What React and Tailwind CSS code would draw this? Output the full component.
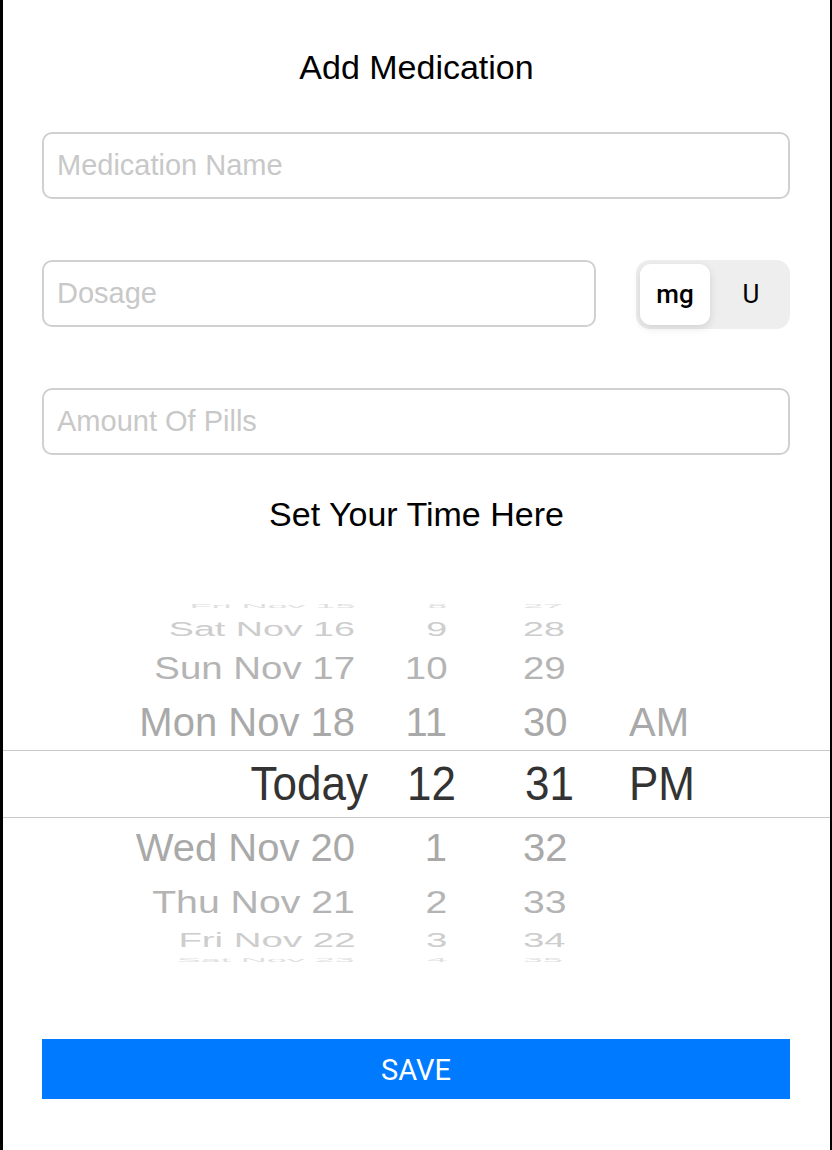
import React, { useState } from 'react';

const rows = [
  { date: 'Fri Nov 15', hour: '8', min: '27', ap: '', h: 'h-[20px]', color: 'text-[#e0e0e0]', tf: 'scale-x-[0.9] scale-y-[0.15]' },
  { date: 'Sat Nov 16', hour: '9', min: '28', ap: '', h: 'h-[26px]', color: 'text-[#cdcdcd]', tf: 'scale-x-[0.94] scale-y-[0.52]' },
  { date: 'Sun Nov 17', hour: '10', min: '29', ap: '', h: 'h-[52px]', color: 'text-[#b4b4b4]', tf: 'scale-x-[0.96] scale-y-[0.77]' },
  { date: 'Mon Nov 18', hour: '11', min: '30', ap: 'AM', h: 'h-[56px]', color: 'text-[#a9a9a9]', tf: 'scale-x-100 scale-y-100' },
  { selected: true, date: 'Today', hour: '12', min: '31', ap: 'PM' },
  { date: 'Wed Nov 20', hour: '1', min: '32', ap: '', h: 'h-[60px]', color: 'text-[#a9a9a9]', tf: 'scale-x-100 scale-y-[0.95]' },
  { date: 'Thu Nov 21', hour: '2', min: '33', ap: '', h: 'h-[48px]', color: 'text-[#b4b4b4]', tf: 'scale-x-[0.98] scale-y-[0.8]' },
  { date: 'Fri Nov 22', hour: '3', min: '34', ap: '', h: 'h-[28px]', color: 'text-[#cdcdcd]', tf: 'scale-x-[0.96] scale-y-[0.5]' },
  { date: 'Sat Nov 23', hour: '4', min: '35', ap: '', h: 'h-[12px]', color: 'text-[#e0e0e0]', tf: 'scale-x-[0.9] scale-y-[0.15]' },
];

const PickerRow = ({ row }) => {
  if (row.selected) {
    return (
      <div className="flex h-[68px] items-center border-y border-[#c8c8c8] text-[44px] leading-none text-[#333333]">
        <div className="w-[365px] text-right">
          <span className="inline-block origin-right scale-y-[1.08]">{row.date}</span>
        </div>
        <div className="w-[88px] text-right">
          <span className="inline-block origin-right scale-y-[1.08]">{row.hour}</span>
        </div>
        <div className="w-[69px]" />
        <div className="w-[104px]">
          <span className="inline-block origin-left scale-y-[1.08]">{row.min}</span>
        </div>
        <div>
          <span className="inline-block origin-left scale-y-[1.08]">{row.ap}</span>
        </div>
      </div>
    );
  }

  return (
    <div className={`flex items-center overflow-hidden text-[40px] leading-none ${row.h} ${row.color}`}>
      <div className="w-[352px] text-right">
        <span className={`inline-block origin-right ${row.tf}`}>{row.date}</span>
      </div>
      <div className="w-[92px] text-right">
        <span className={`inline-block origin-right ${row.tf}`}>{row.hour}</span>
      </div>
      <div className="w-[76px]" />
      <div className="w-[106px]">
        <span className={`inline-block origin-left ${row.tf}`}>{row.min}</span>
      </div>
      <div>
        <span className={`inline-block origin-left ${row.tf}`}>{row.ap}</span>
      </div>
    </div>
  );
};

const App = () => {
  const [unit, setUnit] = useState('mg');
  const [form, setForm] = useState({ name: '', dosage: '', pills: '' });

  const handleChange = (e) => {
    const { name, value } = e.target;
    setForm(prev => ({ ...prev, [name]: value }));
  };

  const inputClass =
    'h-[67px] w-full rounded-[10px] border-2 border-[#d0d0d0] bg-white px-[13px] text-[29px] text-black placeholder:text-[#c8c8c8] focus:outline-none';

  return (
    <div className="min-h-[1150px] w-full border-l-[3px] border-r-2 border-black bg-white font-['Liberation_Sans',Arial,sans-serif]">
      <h1 className="pt-[50px] text-center text-[34px] leading-[34px] text-black">Add Medication</h1>

      <div className="px-[39px] pr-[40px]">
        <div className="mt-[48px]">
          <input
            name="name" value={form.name} onChange={handleChange}
            placeholder="Medication Name" className={inputClass}
          />
        </div>

        <div className="mt-[61px] flex items-start gap-[40px]">
          <input
            name="dosage" value={form.dosage} onChange={handleChange}
            placeholder="Dosage" className={`${inputClass} flex-1`}
          />
          <div className="flex h-[69px] w-[154px] shrink-0 gap-[6px] rounded-[14px] bg-[#eeeeef] p-[4px] font-['Roboto',sans-serif] text-[26px] text-black">
            <button
              type="button" onClick={() => setUnit('mg')}
              className={`flex-1 rounded-[11px] ${unit === 'mg' ? 'bg-white font-medium shadow-[0_3px_8px_rgba(0,0,0,0.12)]' : ''}`}
            >
              mg
            </button>
            <button
              type="button" onClick={() => setUnit('U')}
              className={`flex-1 rounded-[11px] ${unit === 'U' ? 'bg-white font-medium shadow-[0_3px_8px_rgba(0,0,0,0.12)]' : ''}`}
            >
              U
            </button>
          </div>
        </div>

        <div className="mt-[59px]">
          <input
            name="pills" value={form.pills} onChange={handleChange}
            placeholder="Amount Of Pills" className={inputClass}
          />
        </div>
      </div>

      <h2 className="mt-[42px] text-center text-[34px] leading-[34px] text-black">Set Your Time Here</h2>

      <div className="mt-[65px] flex flex-col">
        {rows.map(row => (
          <PickerRow key={row.date} row={row} />
        ))}
      </div>

      <div className="mt-[73px] px-[39px] pr-[40px]">
        <button
          type="button"
          className="h-[60px] w-full bg-[#007aff] pt-[3px] font-['Roboto',sans-serif] text-[29px] text-white"
        >
          SAVE
        </button>
      </div>
    </div>
  );
};

export default App;
